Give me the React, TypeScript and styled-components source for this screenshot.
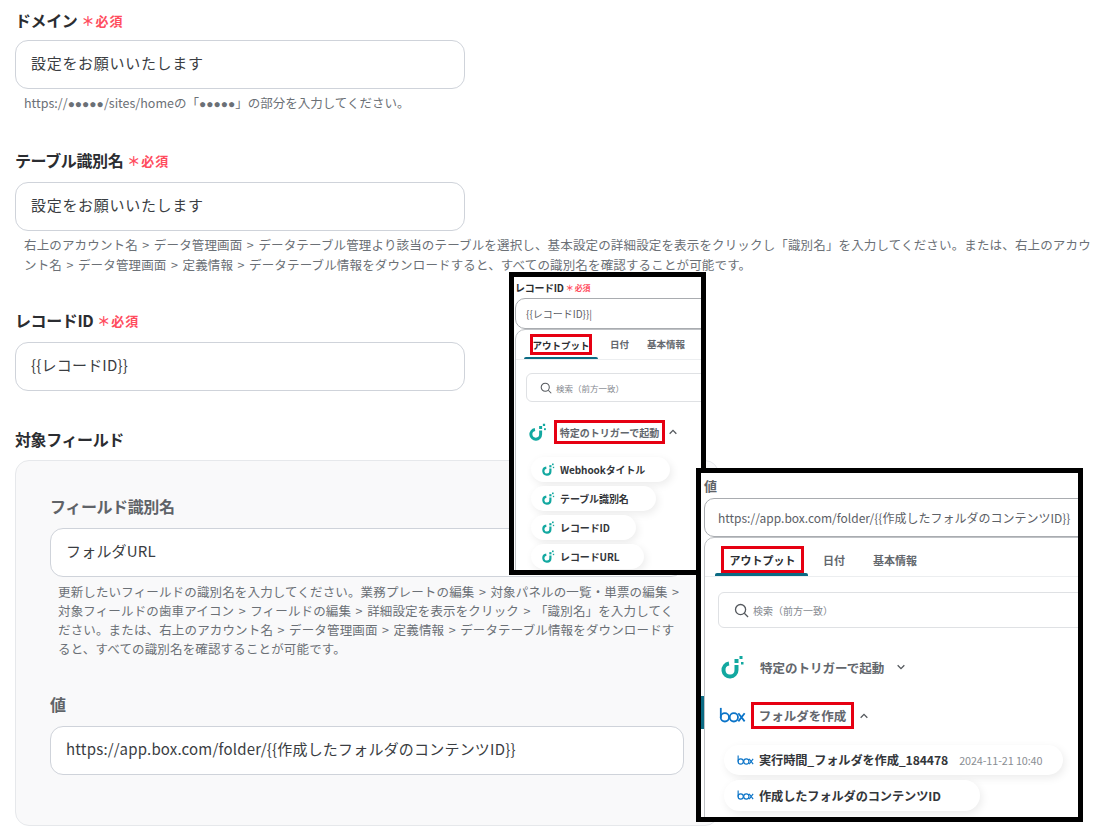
import styled, {createGlobalStyle} from 'styled-components';

const colors = {
    text: '#2b2d31',
    muted: '#6b7076',
    label: '#5f6368',
    border: '#cfd3da',
    required: '#ff4d5e',
    teal: '#0b6b84',
    red: '#e60012',
    logo: '#12a8a0',
    box: '#0b74c8',
};

const fontStack = '"Noto Sans CJK JP", "Noto Sans", "Liberation Sans", sans-serif';

const GlobalStyle = createGlobalStyle`
    html, body {
        margin: 0;
        background: #fff;
        font-family: ${fontStack};
    }
`;

const Page = styled.div`
    position: relative;
    width: 1099px;
    height: 835px;
    overflow: hidden;
    padding: 11px 0 0 15px;
    box-sizing: border-box;
    background: #fff;
`;

const Field = styled.div<{$gap: number}>`
    margin-bottom: ${p => p.$gap}px;
`;

const Label = styled.div<{$muted?: boolean; $below?: number}>`
    display: flex;
    align-items: center;
    gap: 4px;
    height: 20px;
    padding-bottom: 3px;
    box-sizing: border-box;
    margin-bottom: ${p => p.$below ?? 11}px;
    font-size: 16px;
    font-weight: 700;
    letter-spacing: -0.4px;
    color: ${p => p.$muted ? colors.label : colors.text};
`;

const Required = styled.span`
    display: inline-flex;
    align-items: center;
    margin-top: 2px;
    font-size: 13px;
    font-weight: 700;
    letter-spacing: 1px;
    color: ${colors.required};
`;

const Input = styled.input<{$width: number; $tracking?: number}>`
    display: block;
    width: ${p => p.$width}px;
    height: 49px;
    padding: 0 15px 5px;
    box-sizing: border-box;
    border: 1px solid ${colors.border};
    border-radius: 13px;
    background: #fff;
    color: #3a3d42;
    font-family: ${fontStack};
    font-size: 15px;
    letter-spacing: ${p => p.$tracking ?? 0.2}px;
    outline: none;
`;

const Hint = styled.p<{$indent: number; $lineHeight: number; $top: number; $tracking?: number}>`
    margin: ${p => p.$top}px 0 0 ${p => p.$indent}px;
    font-size: 12.5px;
    line-height: ${p => p.$lineHeight}px;
    letter-spacing: ${p => p.$tracking ?? 0.15}px;
    word-spacing: 1.5px;
    white-space: nowrap;
    color: ${colors.muted};
`;

const Dots = styled.span`
    font-family: "Liberation Sans", sans-serif;
    font-size: 12px;
`;

const SubPanel = styled.div`
    width: 704px;
    height: 366px;
    padding: 36px 0 0 34px;
    box-sizing: border-box;
    border: 1px solid #e6e8eb;
    border-radius: 14px;
    background: #f9f9fa;
`;

const Shot = styled.div<{$left: number; $top: number; $width: number; $height: number}>`
    position: absolute;
    left: ${p => p.$left}px;
    top: ${p => p.$top}px;
    width: ${p => p.$width}px;
    height: ${p => p.$height}px;
    box-sizing: border-box;
    border: 5px solid #000;
    background: #fff;
    overflow: hidden;
`;

const ShotLabel = styled.div<{$size: number; $height: number; $left: number; $muted?: boolean}>`
    display: flex;
    align-items: center;
    gap: 2px;
    height: ${p => p.$height}px;
    padding-left: ${p => p.$left}px;
    font-size: ${p => p.$size}px;
    font-weight: 700;
    letter-spacing: -0.3px;
    color: ${p => p.$muted ? colors.label : colors.text};
`;

const ShotRequired = styled.span`
    font-size: 8px;
    font-weight: 700;
    color: ${colors.required};
`;

const ShotInput = styled.div<{$size: number; $height: number; $left: number; $pad: number}>`
    display: flex;
    align-items: center;
    width: 500px;
    height: ${p => p.$height}px;
    margin-left: ${p => p.$left}px;
    padding-left: ${p => p.$pad}px;
    box-sizing: border-box;
    border: 1px solid #a9acb0;
    border-radius: 10px;
    font-size: ${p => p.$size}px;
    white-space: nowrap;
    color: #5c6066;
`;

const Dropdown = styled.div<{$left: number}>`
    width: 500px;
    height: 400px;
    margin-left: ${p => p.$left}px;
    box-sizing: border-box;
    border: 1px solid #bfc2c6;
    border-radius: 10px 0 0 0;
`;

const Tabs = styled.div<{$height: number; $left: number; $gap: number; $size: number; $drop: number}>`
    display: flex;
    align-items: flex-end;
    gap: ${p => p.$gap}px;
    height: ${p => p.$height}px;
    margin-left: ${p => p.$left}px;
    padding-bottom: ${p => p.$drop}px;
    box-sizing: border-box;
    font-size: ${p => p.$size}px;
    font-weight: 700;
    color: #63676d;
    white-space: nowrap;
`;

const Tab = styled.span<{$bottom: number; $left?: number}>`
    margin-bottom: ${p => p.$bottom}px;
    margin-left: ${p => p.$left ?? 0}px;
`;

const TabRule = styled.div<{$width: number; $left: number; $thick: number}>`
    height: ${p => p.$thick}px;
    border-bottom: 1px solid #eceef0;
    box-sizing: content-box;
    &::before {
        content: '';
        display: block;
        width: ${p => p.$width}px;
        height: ${p => p.$thick}px;
        margin-left: ${p => p.$left}px;
        border-radius: 2px 2px 0 0;
        background: ${colors.teal};
    }
`;

const Marked = styled.span<{$width: number; $height: number; $grey?: boolean}>`
    display: inline-flex;
    align-items: center;
    justify-content: center;
    width: ${p => p.$width}px;
    height: ${p => p.$height}px;
    box-sizing: border-box;
    border: 3px solid ${colors.red};
    color: ${p => p.$grey ? '#63676d' : '#2b2d31'};
    white-space: nowrap;
`;

const Search = styled.div<{$left: number; $top: number; $height: number; $size: number; $pad: number}>`
    display: flex;
    align-items: center;
    gap: 4px;
    width: 500px;
    height: ${p => p.$height}px;
    margin: ${p => p.$top}px 0 0 ${p => p.$left}px;
    padding-left: ${p => p.$pad}px;
    box-sizing: border-box;
    border: 1px solid #dfe1e4;
    border-radius: 6px;
    font-size: ${p => p.$size}px;
    color: #85898f;
`;

const Section = styled.div<{$top: number; $left: number; $gap: number; $size: number}>`
    display: flex;
    align-items: center;
    gap: ${p => p.$gap}px;
    margin: ${p => p.$top}px 0 0 ${p => p.$left}px;
    font-size: ${p => p.$size}px;
    font-weight: 700;
    color: #63676d;
    white-space: nowrap;
`;

const ActiveSection = styled(Section)`
    position: relative;
    &::before {
        content: '';
        position: absolute;
        left: -18px;
        top: -6px;
        width: 3px;
        height: 33px;
        background: ${colors.teal};
    }
`;

const PillList = styled.div<{$top: number; $left: number; $gap: number}>`
    display: flex;
    flex-direction: column;
    align-items: flex-start;
    gap: ${p => p.$gap}px;
    margin: ${p => p.$top}px 0 0 ${p => p.$left}px;
`;

const Pill = styled.div<{$width: number; $height: number; $size: number; $pad: number}>`
    display: flex;
    align-items: center;
    gap: 5px;
    width: ${p => p.$width}px;
    height: ${p => p.$height}px;
    padding-left: ${p => p.$pad}px;
    box-sizing: border-box;
    border-radius: 16px;
    background: #fff;
    box-shadow: 2px 3px 8px rgba(0, 0, 0, 0.08);
    font-size: ${p => p.$size}px;
    font-weight: 700;
    letter-spacing: -0.1px;
    color: #33363a;
    white-space: nowrap;
`;

const Stamp = styled.span`
    margin-left: 6px;
    font-size: 10.8px;
    font-weight: 400;
    color: #8a8e93;
`;

const ChevronSvg = styled.svg<{$pull: number}>`
    margin-left: ${p => p.$pull}px;
`;

const TriggerLogo = ({size}: {size: number}) => (
    <svg width={size} height={size} viewBox="0 0 24 24" fill="none">
        <path d="M8 8.6A6.5 6.5 0 1 0 15.5 15V10" stroke={colors.logo} strokeWidth="4"/>
        <rect x="13.5" y="4" width="4" height="4" fill={colors.logo}/>
        <rect x="18.5" y="1" width="3" height="3" fill={colors.logo}/>
        <rect x="20" y="7" width="2.5" height="2.5" fill={colors.logo}/>
    </svg>
);

const BoxLogo = ({width}: {width: number}) => (
    <svg width={width} height={width * 0.6} viewBox="0 0 30 18" fill="none" stroke={colors.box} strokeWidth="2">
        <path d="M2 1v11"/>
        <circle cx="6.5" cy="11.5" r="4.6"/>
        <circle cx="16.5" cy="11.5" r="4.6"/>
        <path d="M21.5 7l7 9M28.5 7l-7 9"/>
    </svg>
);

const SearchIcon = ({size}: {size: number}) => (
    <svg width={size} height={size} viewBox="0 0 16 16" fill="none" stroke="#55595e" strokeWidth="1.4">
        <circle cx="7" cy="7" r="5.4"/>
        <path d="M11 11l4 4"/>
    </svg>
);

const Chevron = ({up, size, pull = 0}: {up?: boolean; size: number; pull?: number}) => (
    <ChevronSvg $pull={pull} width={size} height={size} viewBox="0 0 12 12" fill="none" stroke="#55595e" strokeWidth="1.6">
        <path d={up ? 'M2 8l4-4 4 4' : 'M2 4l4 4 4-4'}/>
    </ChevronSvg>
);

const RequiredMark = () => (
    <Required>＊必須</Required>
);

const Masked = () => <Dots>●●●●●</Dots>;

const FirstShot = () => (
    <Shot $left={509} $top={272} $width={197} $height={303}>
        <ShotLabel $size={10} $height={21} $left={1}>
            レコードID<ShotRequired>＊ 必須</ShotRequired>
        </ShotLabel>
        <ShotInput $size={10} $height={31} $left={1} $pad={10}>{'{{レコードID}}|'}</ShotInput>
        <Dropdown $left={1}>
            <Tabs $height={27} $left={14} $gap={18} $size={9.5} $drop={2}>
                <Marked $width={62} $height={21}>アウトプット</Marked>
                <Tab $bottom={4}>日付</Tab>
                <Tab $bottom={4}>基本情報</Tab>
            </Tabs>
            <TabRule $width={74} $left={8} $thick={2}/>
            <Search $left={10} $top={13} $height={29} $size={8.5} $pad={13}>
                <SearchIcon size={12}/>検索（前方一致）
            </Search>
            <Section $top={18} $left={13} $gap={7} $size={10}>
                <TriggerLogo size={18}/>
                <Marked $width={111} $height={24} $grey>特定のトリガーで起動</Marked>
                <Chevron up size={10} pull={-4}/>
            </Section>
            <PillList $top={13} $left={15} $gap={4}>
                <Pill $width={139} $height={25} $size={10} $pad={11}><TriggerLogo size={13}/>Webhookタイトル</Pill>
                <Pill $width={125} $height={25} $size={10} $pad={11}><TriggerLogo size={13}/>テーブル識別名</Pill>
                <Pill $width={105} $height={25} $size={10} $pad={11}><TriggerLogo size={13}/>レコードID</Pill>
                <Pill $width={113} $height={25} $size={10} $pad={11}><TriggerLogo size={13}/>レコードURL</Pill>
            </PillList>
        </Dropdown>
    </Shot>
);

const SecondShot = () => (
    <Shot $left={696} $top={468} $width={387} $height={354}>
        <ShotLabel $size={13} $height={25} $left={3} $muted>値</ShotLabel>
        <ShotInput $size={12} $height={39} $left={3} $pad={13}>
            {'https://app.box.com/folder/{{作成したフォルダのコンテンツID}}'}
        </ShotInput>
        <Dropdown $left={3}>
            <Tabs $height={35} $left={16} $gap={19} $size={11} $drop={0}>
                <Marked $width={83} $height={27}>アウトプット</Marked>
                <Tab $bottom={5}>日付</Tab>
                <Tab $bottom={5} $left={9}>基本情報</Tab>
            </Tabs>
            <TabRule $width={93} $left={10} $thick={3}/>
            <Search $left={13} $top={15} $height={36} $size={10} $pad={15}>
                <SearchIcon size={15}/>検索（前方一致）
            </Search>
            <Section $top={27} $left={16} $gap={15} $size={12.5}>
                <TriggerLogo size={24}/>
                <span>特定のトリガーで起動</span>
                <Chevron size={10} pull={-3}/>
            </Section>
            <ActiveSection $top={23} $left={14} $gap={5} $size={12.5}>
                <BoxLogo width={27}/>
                <Marked $width={103} $height={27} $grey>フォルダを作成</Marked>
                <Chevron up size={10}/>
            </ActiveSection>
            <PillList $top={16} $left={19} $gap={5}>
                <Pill $width={339} $height={30} $size={12.2} $pad={13}>
                    <BoxLogo width={17}/>実行時間_フォルダを作成_184478<Stamp>2024-11-21 10:40</Stamp>
                </Pill>
                <Pill $width={256} $height={31} $size={12.2} $pad={13}>
                    <BoxLogo width={17}/>作成したフォルダのコンテンツID
                </Pill>
            </PillList>
        </Dropdown>
    </Shot>
);

const App = () => (
    <Page>
        <GlobalStyle/>
        <Field $gap={37}>
            <Label $below={9}>ドメイン<RequiredMark/></Label>
            <Input $width={450} $tracking={0.7} readOnly value="設定をお願いいたします"/>
            <Hint $top={4} $indent={9} $lineHeight={20} $tracking={0}>https://<Masked/>/sites/homeの「<Masked/>」の部分を入力してください。</Hint>
        </Field>
        <Field $gap={36}>
            <Label>テーブル識別名<RequiredMark/></Label>
            <Input $width={450} $tracking={0.7} readOnly value="設定をお願いいたします"/>
            <Hint $top={4} $indent={9} $lineHeight={20}>
                右上のアカウント名 &gt; データ管理画面 &gt; データテーブル管理より該当のテーブルを選択し、基本設定の詳細設定を表示をクリックし「識別名」を入力してください。または、右上のアカウ<br/>
                ント名 &gt; データ管理画面 &gt; 定義情報 &gt; データテーブル情報をダウンロードすると、すべての識別名を確認することが可能です。
            </Hint>
        </Field>
        <Field $gap={39}>
            <Label>レコードID<RequiredMark/></Label>
            <Input $width={450} readOnly value="{{レコードID}}"/>
        </Field>
        <Label $below={10}>対象フィールド</Label>
        <SubPanel>
            <Field $gap={37}>
                <Label $muted>フィールド識別名</Label>
                <Input $width={634} readOnly value="フォルダURL"/>
                <Hint $top={5} $indent={8} $lineHeight={19}>
                    更新したいフィールドの識別名を入力してください。業務プレートの編集 &gt; 対象パネルの一覧・単票の編集 &gt;<br/>
                    対象フィールドの歯車アイコン &gt; フィールドの編集 &gt; 詳細設定を表示をクリック &gt; 「識別名」を入力してく<br/>
                    ださい。または、右上のアカウント名 &gt; データ管理画面 &gt; 定義情報 &gt; データテーブル情報をダウンロードす<br/>
                    ると、すべての識別名を確認することが可能です。
                </Hint>
            </Field>
            <Label $muted>値</Label>
            <Input $width={634} readOnly value="https://app.box.com/folder/{{作成したフォルダのコンテンツID}}"/>
        </SubPanel>
        <FirstShot/>
        <SecondShot/>
    </Page>
);

export default App;
